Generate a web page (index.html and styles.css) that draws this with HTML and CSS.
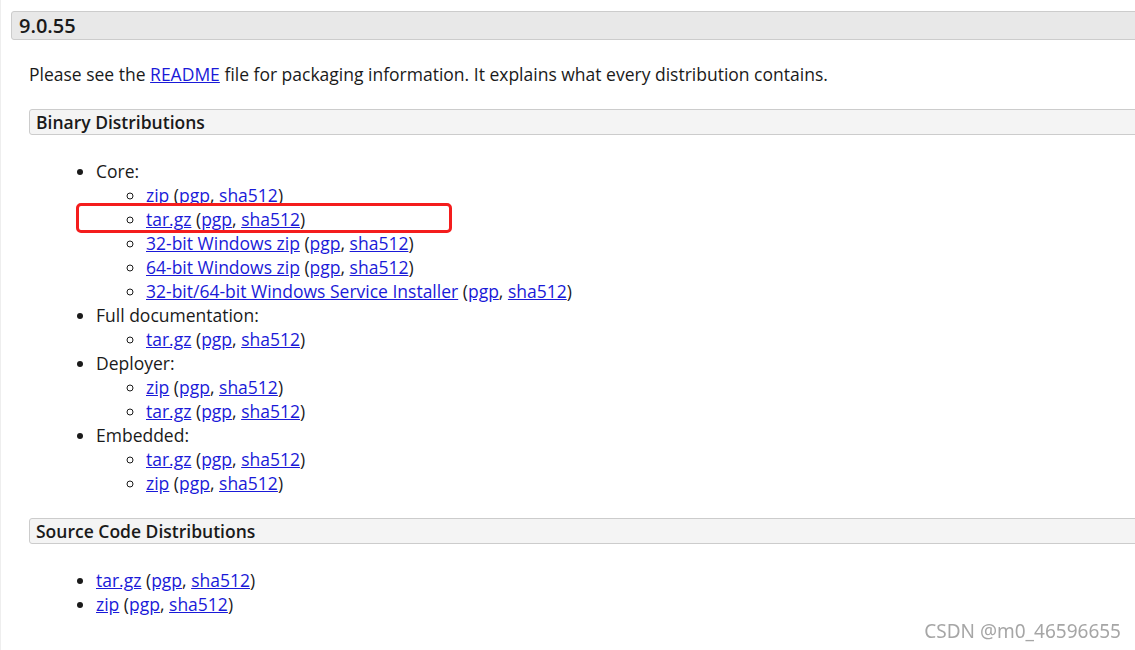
FILE: index.html
```html
<!DOCTYPE html>
<html lang="en">

<head>
    <meta charset="UTF-8">
    <title>Tomcat 9.0.55 Downloads</title>
    <link rel="stylesheet" href="styles.css">
</head>

<body>
    <div class="page">
        <!-- Release header -->
        <h2 class="release">9.0.55</h2>

        <div class="section">
            <p>Please see the <a href="#">README</a> file for packaging information. It explains what every distribution contains.</p>

            <!-- Binary -->
            <h3 class="dist-title">Binary Distributions</h3>
            <ul class="dist-list">
                <li>Core:
                    <ul>
                        <li><a href="#">zip</a> (<a href="#">pgp</a>, <a href="#">sha512</a>)</li>
                        <li class="marked"><a href="#">tar.gz</a> (<a href="#">pgp</a>, <a href="#">sha512</a>)<span class="highlight"></span></li>
                        <li><a href="#">32-bit Windows zip</a> (<a href="#">pgp</a>, <a href="#">sha512</a>)</li>
                        <li><a href="#">64-bit Windows zip</a> (<a href="#">pgp</a>, <a href="#">sha512</a>)</li>
                        <li><a href="#">32-bit/64-bit Windows Service Installer</a> (<a href="#">pgp</a>, <a href="#">sha512</a>)</li>
                    </ul>
                </li>
                <li>Full documentation:
                    <ul>
                        <li><a href="#">tar.gz</a> (<a href="#">pgp</a>, <a href="#">sha512</a>)</li>
                    </ul>
                </li>
                <li>Deployer:
                    <ul>
                        <li><a href="#">zip</a> (<a href="#">pgp</a>, <a href="#">sha512</a>)</li>
                        <li><a href="#">tar.gz</a> (<a href="#">pgp</a>, <a href="#">sha512</a>)</li>
                    </ul>
                </li>
                <li>Embedded:
                    <ul>
                        <li><a href="#">tar.gz</a> (<a href="#">pgp</a>, <a href="#">sha512</a>)</li>
                        <li><a href="#">zip</a> (<a href="#">pgp</a>, <a href="#">sha512</a>)</li>
                    </ul>
                </li>
            </ul>

            <!-- Source -->
            <h3 class="dist-title">Source Code Distributions</h3>
            <ul class="dist-list">
                <li><a href="#">tar.gz</a> (<a href="#">pgp</a>, <a href="#">sha512</a>)</li>
                <li><a href="#">zip</a> (<a href="#">pgp</a>, <a href="#">sha512</a>)</li>
            </ul>
        </div>
    </div>

    <div class="watermark">CSDN @m0_46596655</div>
</body>

</html>
```

FILE: styles.css
```css
/* Base */
html, body {
    margin: 0;
    padding: 0;
    background: #fff;
    overflow: hidden;
}

body {
    min-height: 100vh;
    font-family: 'Open Sans', 'Noto Sans', sans-serif;
    font-size: 17.5px;
    line-height: 24px;
    color: #1a1a1a;
    border-left: 1px solid #eee;
}

a {
    color: #1a1ad8;
    text-decoration: underline;
}

.page {
    width: 1200px;
    padding: 11px 0 0 10px;
}

/* Headers */
.release {
    margin: 0;
    height: 29px;
    box-sizing: border-box;
    padding: 0 7px;
    font-size: 20px;
    font-weight: 600;
    line-height: 27px;
    background-color: #e8e8e8;
    border: 1px solid #ccc;
    border-radius: 3px;
}

.section {
    padding-left: 18px;
}

.section p {
    margin: 22px 0 0 0;
}

.dist-title {
    margin: 23px 0 0 0;
    padding: 0 6px;
    font-size: 17.5px;
    font-weight: 600;
    line-height: 24px;
    background-color: #f4f4f4;
    border: 1px solid #ccc;
    border-radius: 3px;
}

/* Lists */
.dist-list {
    margin: 24px 0 0 0;
    padding-left: 67px;
    list-style: disc;
}

.dist-list ul {
    margin: 0;
    padding-left: 50px;
    list-style: circle;
}

.marked {
    position: relative;
}

.highlight {
    position: absolute;
    left: -70px;
    top: -4px;
    width: 376px;
    height: 30px;
    box-sizing: border-box;
    border: 3px solid #f41d1d;
    border-radius: 5px;
}

/* Watermark */
.watermark {
    position: fixed;
    right: 14px;
    bottom: 7px;
    font-family: 'Noto Sans', sans-serif;
    font-size: 19px;
    color: #a6a6a6;
}
```
